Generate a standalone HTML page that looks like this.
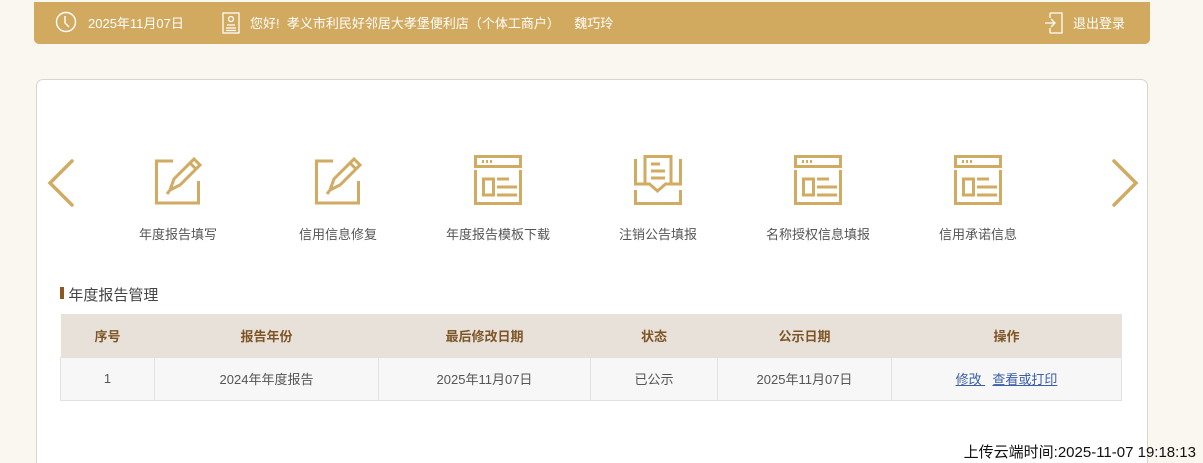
<!DOCTYPE html>
<html style="overflow:hidden;height:463px"><head><meta charset="utf-8"><style>
*{margin:0;padding:0;box-sizing:border-box}
body{width:1203px;height:463px;overflow:hidden;background:#faf7f0;font-family:"Liberation Sans","Noto Sans CJK SC",sans-serif;position:relative}
.hdr{position:absolute;left:34px;top:2px;width:1116px;height:42px;background:#d1a95f;border-radius:0 0 5px 5px;color:#fff;font-size:13px}
.hdr span{position:absolute;top:14px;line-height:16px}
.card{position:absolute;left:36px;top:79px;width:1112px;height:384px;background:#fff;border:1px solid #d9d6d0;border-bottom:none;border-radius:7px 7px 0 0}
.ic{position:absolute;top:154px;width:50px;height:52px}
.lb{position:absolute;top:224px;width:160px;text-align:center;font-size:13px;color:#555}
.title{position:absolute;left:60px;top:284px;font-size:15px;color:#444}
.title:before{content:"";position:absolute;left:0;top:3px;width:4px;height:12px;background:#8b5a22}
table{position:absolute;left:60px;top:314px;width:1062px;border-collapse:collapse;font-size:13px}
th{height:43px;background:#e8e1d9;color:#7d5526;font-weight:bold}
td{height:43px;background:#f7f7f7;color:#555;text-align:center;border:1px solid #e2e2e2}
a{color:#3a5ea8;text-decoration:underline}
.ft{position:absolute;right:7px;top:441px;font-size:15px;color:#111}
</style></head><body>
<div class="hdr">
<svg style="position:absolute;left:21px;top:9px" width="22" height="22" viewBox="0 0 22 22" fill="none" stroke="#fff" stroke-width="1.4"><circle cx="11" cy="11" r="9.5"/><path d="M10 5v7l4 4"/></svg>
<span style="left:54px">2025年11月07日</span>
<svg style="position:absolute;left:188px;top:10px" width="18" height="22" viewBox="0 0 18 22" fill="none" stroke="#fff" stroke-width="1.3"><rect x="1" y="1" width="16" height="20"/><circle cx="9" cy="7" r="2.5"/><path d="M5 13h8M4 16h10M4 18.5h10"/></svg>
<span style="left:216px">您好!&nbsp;&nbsp;孝义市利民好邻居大孝堡便利店（个体工商户）&nbsp;&nbsp;&nbsp;&nbsp;魏巧玲</span>
<svg style="position:absolute;left:1010px;top:10px" width="20" height="22" viewBox="0 0 20 22" fill="none" stroke="#fff" stroke-width="1.3"><path d="M6 1h12v20H6M6 1v5M6 16v5M1 11h10M7 7l4 4-4 4"/></svg>
<span style="left:1039px">退出登录</span>
</div>
<div class="card"></div>
<svg style="position:absolute;left:46px;top:158px" width="30" height="50" viewBox="0 0 30 50" fill="none" stroke="#d1ab62" stroke-width="3.5" stroke-linecap="round"><path d="M26 3L4 25l22 22"/></svg>
<svg style="position:absolute;left:1110px;top:158px" width="30" height="50" viewBox="0 0 30 50" fill="none" stroke="#d1ab62" stroke-width="3.5" stroke-linecap="round"><path d="M4 3l22 22L4 47"/></svg>

<svg class="ic" style="left:153px" viewBox="0 0 50 52" fill="none" stroke="#d1ab62" stroke-width="3"><path d="M20 7H3.5v42h42V27"/><path d="M17 36l4-11 20-20 6 6-20 20z M14 40l3-4 M37 9l6 6"/></svg>
<svg class="ic" style="left:313px" viewBox="0 0 50 52" fill="none" stroke="#d1ab62" stroke-width="3"><path d="M20 7H3.5v42h42V27"/><path d="M17 36l4-11 20-20 6 6-20 20z M14 40l3-4 M37 9l6 6"/></svg>
<svg class="ic" style="left:473px" viewBox="0 0 50 52" fill="none" stroke="#d1ab62" stroke-width="3"><rect x="2.5" y="2.5" width="45" height="10"/><path d="M2.5 16v33.5h45V16"/><rect x="10.5" y="25" width="10" height="16"/><path d="M24 25h12M24 33h20M24 41h20M9 7.5h2M13 7.5h2M17 7.5h2"/></svg>
<svg class="ic" style="left:633px" viewBox="0 0 50 52" fill="none" stroke="#d1ab62" stroke-width="3"><path d="M12 30V2.5h26V30"/><path d="M18 10h9M18 17h14M18 24h14"/><path d="M2.5 5v25h14l8 7 8-7h15V5"/><path d="M2.5 36v13.5h45V36"/></svg>
<svg class="ic" style="left:793px" viewBox="0 0 50 52" fill="none" stroke="#d1ab62" stroke-width="3"><rect x="2.5" y="2.5" width="45" height="10"/><path d="M2.5 16v33.5h45V16"/><rect x="10.5" y="25" width="10" height="16"/><path d="M24 25h12M24 33h20M24 41h20M9 7.5h2M13 7.5h2M17 7.5h2"/></svg>
<svg class="ic" style="left:953px" viewBox="0 0 50 52" fill="none" stroke="#d1ab62" stroke-width="3"><rect x="2.5" y="2.5" width="45" height="10"/><path d="M2.5 16v33.5h45V16"/><rect x="10.5" y="25" width="10" height="16"/><path d="M24 25h12M24 33h20M24 41h20M9 7.5h2M13 7.5h2M17 7.5h2"/></svg>

<div class="lb" style="left:98px">年度报告填写</div>
<div class="lb" style="left:258px">信用信息修复</div>
<div class="lb" style="left:418px">年度报告模板下载</div>
<div class="lb" style="left:578px">注销公告填报</div>
<div class="lb" style="left:738px">名称授权信息填报</div>
<div class="lb" style="left:898px">信用承诺信息</div>

<div class="title">&nbsp;&nbsp;年度报告管理</div>
<table>
<tr><th style="width:94px">序号</th><th style="width:224px">报告年份</th><th style="width:212px">最后修改日期</th><th style="width:127px">状态</th><th style="width:174px">公示日期</th><th>操作</th></tr>
<tr><td>1</td><td>2024年年度报告</td><td>2025年11月07日</td><td>已公示</td><td>2025年11月07日</td><td><a>修改&nbsp;</a>&nbsp;&nbsp;<a>查看或打印</a></td></tr>
</table>
<div class="ft">上传云端时间:2025-11-07 19:18:13</div>
</body></html>
